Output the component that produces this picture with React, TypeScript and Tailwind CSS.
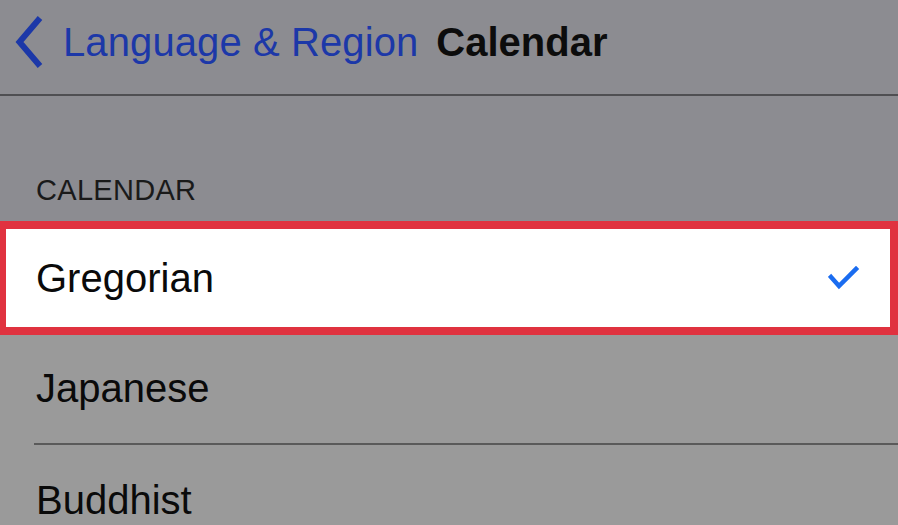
export default function App() {
  const font = { fontFamily: '"Liberation Sans", Arial, sans-serif' };
  return (
    <div className="w-[898px] h-[525px] overflow-hidden bg-[#8c8c91] flex flex-col" style={font}>
      <div className="h-[96px] shrink-0 flex items-center pl-[15px] border-b-[2px] border-[#4f4f52] pb-[10px]">
        <svg width="28" height="54" viewBox="0 0 28 54" className="shrink-0">
          <polyline points="25,3 4.5,27 25,51" fill="none" stroke="#1c38a8" strokeWidth="6" strokeLinecap="butt" strokeLinejoin="miter" />
        </svg>
        <span className="ml-[20px] text-[40px] leading-none text-[#1c38a8] tracking-[0.1px]">Language &amp; Region</span>
        <span className="ml-[18px] text-[40px] leading-none font-bold text-[#0c0c0c]">Calendar</span>
      </div>
      <div className="h-[125px] shrink-0 flex items-end pl-[36px] pb-[16px]">
        <span className="text-[29px] leading-none text-[#1a1a1a] tracking-[0.3px]">CALENDAR</span>
      </div>
      <div className="shrink-0 border-[8px] border-l-[6px] border-[#e0323f] bg-white h-[114px] flex items-center justify-between pl-[30px] pr-[30px]">
        <span className="text-[40px] leading-none text-[#0a0a0a]">Gregorian</span>
        <svg width="32" height="26" viewBox="0 0 32 26">
          <polyline points="3,12 11,21 28,4" fill="none" stroke="#1a6cf0" strokeWidth="4.5" strokeLinecap="square" />
        </svg>
      </div>
      <div className="flex-1 bg-[#9a9a9a] flex flex-col">
        <div className="h-[108px] shrink-0 flex items-center pl-[36px] pb-[2px]">
          <span className="text-[40px] leading-none text-[#0a0a0a]">Japanese</span>
        </div>
        <div className="ml-[34px] h-[2px] bg-[#5a5a5a] shrink-0" />
        <div className="h-[108px] shrink-0 flex items-start pt-[35px] pl-[36px]">
          <span className="text-[40px] leading-none text-[#0a0a0a]">Buddhist</span>
        </div>
      </div>
    </div>
  );
}
